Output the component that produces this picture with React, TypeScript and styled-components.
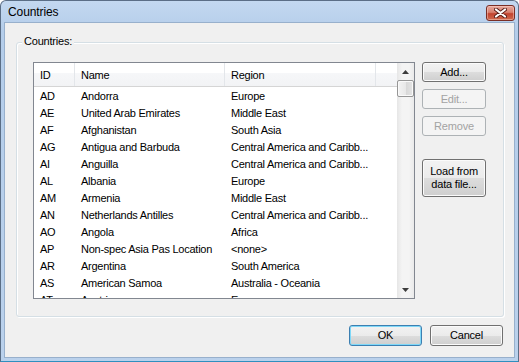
import React from "react";
import styled, { createGlobalStyle } from "styled-components";

interface Country {
    id: string;
    name: string;
    region: string;
}

const CARIB = "Central America and Caribb...";

const COUNTRIES: Country[] = [
    { id: "AD", name: "Andorra", region: "Europe" },
    { id: "AE", name: "United Arab Emirates", region: "Middle East" },
    { id: "AF", name: "Afghanistan", region: "South Asia" },
    { id: "AG", name: "Antigua and Barbuda", region: CARIB },
    { id: "AI", name: "Anguilla", region: CARIB },
    { id: "AL", name: "Albania", region: "Europe" },
    { id: "AM", name: "Armenia", region: "Middle East" },
    { id: "AN", name: "Netherlands Antilles", region: CARIB },
    { id: "AO", name: "Angola", region: "Africa" },
    { id: "AP", name: "Non-spec Asia Pas Location", region: "<none>" },
    { id: "AR", name: "Argentina", region: "South America" },
    { id: "AS", name: "American Samoa", region: "Australia - Oceania" },
    { id: "AT", name: "Austria", region: "Europe" },
];

const COLUMNS = [
    { key: "id", label: "ID", width: 41 },
    { key: "name", label: "Name", width: 150 },
    { key: "region", label: "Region", width: 151 },
] as const;

const Arrow: React.FC<{ up?: boolean }> = ({ up }) => (
    <svg width="7" height="4" viewBox="0 0 7 4">
        <path d={up ? "M3.5 0 L7 4 L0 4 Z" : "M0 0 L7 0 L3.5 4 Z"} fill="#3d3d3d" />
    </svg>
);

const CloseGlyph = () => (
    <svg width="13" height="10" viewBox="0 0 13 10">
        <path d="M2 1.5 L11 8.5 M11 1.5 L2 8.5" stroke="#5a1f1a" strokeWidth="4" strokeLinecap="round" />
        <path d="M2 1.5 L11 8.5 M11 1.5 L2 8.5" stroke="#ffffff" strokeWidth="2.2" strokeLinecap="round" />
    </svg>
);

export default function App() {
    return (
        <>
            <GlobalStyle />
            <Window>
                <TitleBar>
                    <Title>Countries</Title>
                    <CloseButton>
                        <CloseGlyph />
                    </CloseButton>
                </TitleBar>
                <Client>
                    <GroupBox>
                        <Legend>Countries:</Legend>
                        <ListView>
                            <ListMain>
                                <Header>
                                    {COLUMNS.map(c => (
                                        <HeaderCell key={c.key} $width={c.width}>
                                            {c.label}
                                        </HeaderCell>
                                    ))}
                                    <HeaderFiller />
                                </Header>
                                <Rows>
                                    {COUNTRIES.map(c => (
                                        <Row key={c.id}>
                                            <Cell $width={41}>{c.id}</Cell>
                                            <Cell $width={150}>{c.name}</Cell>
                                            <Cell $width={151}>{c.region}</Cell>
                                        </Row>
                                    ))}
                                </Rows>
                            </ListMain>
                            <ScrollBar>
                                <ScrollArrow>
                                    <Arrow up />
                                </ScrollArrow>
                                <Track>
                                    <Thumb />
                                </Track>
                                <ScrollArrow>
                                    <Arrow />
                                </ScrollArrow>
                            </ScrollBar>
                        </ListView>
                        <SideButtons>
                            <Button>Add...</Button>
                            <Button disabled>Edit...</Button>
                            <Button disabled>Remove</Button>
                            <Button $tall>
                                Load from
                                <br />
                                data file...
                            </Button>
                        </SideButtons>
                    </GroupBox>
                    <Footer>
                        <Button $default $wide>
                            OK
                        </Button>
                        <Button $wide>Cancel</Button>
                    </Footer>
                </Client>
            </Window>
        </>
    );
}

// ---------------------------------------------------------------------------
// Styles
// ---------------------------------------------------------------------------

const GlobalStyle = createGlobalStyle`
    html, body {
        margin: 0;
        padding: 0;
        background: #ffffff;
    }
    body {
        font-family: "Liberation Sans", Arial, sans-serif;
        font-size: 11px;
        color: #000;
    }
`;

const Window = styled.div`
    box-sizing: border-box;
    width: 519px;
    height: 362px;
    display: flex;
    flex-direction: column;
    border: 1px solid #5b6e86;
    border-bottom-color: #2f8fbf;
    border-radius: 6px 6px 0 0;
    background: linear-gradient(#c3d8f0, #b4cdea 30px, #bad1ec);
    padding: 0 3px 3px 3px;
    overflow: hidden;
`;

const TitleBar = styled.div`
    height: 21px;
    display: flex;
    align-items: center;
    justify-content: space-between;
    padding: 0 0 0 4px;
`;

const Title = styled.span`
    font-family: "Liberation Sans", Arial, sans-serif;
    font-size: 12px;
    color: #000;
    letter-spacing: -0.1px;
`;

const CloseButton = styled.div`
    box-sizing: border-box;
    width: 29px;
    height: 16px;
    margin-top: 2px;
    display: flex;
    align-items: center;
    justify-content: center;
    border: 1px solid #7a2e25;
    border-radius: 3px;
    background: linear-gradient(#e6a89d 0%, #d8806f 45%, #c2432f 55%, #cf6b4f 100%);
    box-shadow: inset 0 0 0 1px rgba(255, 220, 210, 0.45);
`;

const Client = styled.div`
    flex: 1;
    display: flex;
    flex-direction: column;
    background: #f0f0f0;
    border: 1px solid #98b0cc;
    padding: 19px 10px 0 11px;
`;

const GroupBox = styled.div`
    position: relative;
    box-sizing: border-box;
    height: 275px;
    display: flex;
    gap: 7px;
    padding: 19px 17px 0 16px;
    border: 1px solid #d5dfe5;
    border-radius: 3px;
    box-shadow: inset 1px 1px 0 #ffffff, 1px 1px 0 #ffffff;
`;

const Legend = styled.span`
    position: absolute;
    top: -8px;
    left: 5px;
    padding: 0 2px;
    background: #f0f0f0;
    letter-spacing: -0.2px;
`;

const ListView = styled.div`
    box-sizing: border-box;
    width: 382px;
    height: 237px;
    display: flex;
    border: 1px solid #828790;
    background: #ffffff;
`;

const ListMain = styled.div`
    flex: 1;
    display: flex;
    flex-direction: column;
    overflow: hidden;
`;

const Header = styled.div`
    box-sizing: border-box;
    height: 24px;
    display: flex;
    border-bottom: 1px solid #d5d5d5;
    background: linear-gradient(#ffffff 0%, #ffffff 42%, #f6f7f9 42%, #f2f3f5 100%);
`;

const HeaderCell = styled.div<{ $width: number }>`
    box-sizing: border-box;
    width: ${p => p.$width}px;
    flex: none;
    display: flex;
    align-items: center;
    padding-left: 6px;
    padding-top: 1px;
    border-right: 1px solid #e3e6ea;
    letter-spacing: -0.25px;
`;

const HeaderFiller = styled.div`
    flex: 1;
`;

const Rows = styled.div`
    flex: 1;
    overflow: hidden;
`;

const Row = styled.div`
    height: 17px;
    display: flex;
    align-items: center;
`;

const Cell = styled.div<{ $width: number }>`
    box-sizing: border-box;
    width: ${p => p.$width}px;
    flex: none;
    padding-left: 6px;
    white-space: nowrap;
    overflow: hidden;
    letter-spacing: -0.25px;
`;

const ScrollBar = styled.div`
    width: 17px;
    flex: none;
    display: flex;
    flex-direction: column;
    background: linear-gradient(90deg, #e6e6e6, #f4f4f4 30%, #f4f4f4 70%, #eaeaea);
`;

const ScrollArrow = styled.div`
    height: 17px;
    flex: none;
    display: flex;
    align-items: center;
    justify-content: center;
`;

const Track = styled.div`
    flex: 1;
    display: flex;
    flex-direction: column;
`;

const Thumb = styled.div`
    box-sizing: border-box;
    height: 17px;
    border: 1px solid #969696;
    border-radius: 2px;
    background: linear-gradient(90deg, #f3f3f3, #e8e8e8 50%, #d8d8d8 55%, #e4e4e4);
    box-shadow: inset 0 0 0 1px #fafafa;
`;

const SideButtons = styled.div`
    display: flex;
    flex-direction: column;
    gap: 7px;
`;

const Button = styled.button<{ $tall?: boolean; $wide?: boolean; $default?: boolean }>`
    box-sizing: border-box;
    width: ${p => (p.$wide ? 73 : 64)}px;
    height: ${p => (p.$tall ? 38 : p.$wide ? 21 : 20)}px;
    margin-top: ${p => (p.$tall ? 16 : 0)}px;
    padding: 0;
    font-family: "Liberation Sans", Arial, sans-serif;
    font-size: 11px;
    line-height: 13px;
    letter-spacing: -0.2px;
    color: #000;
    border: 1px solid ${p => (p.$default ? "#3c7fb1" : "#707070")};
    border-radius: 3px;
    background: linear-gradient(#f2f2f2 0%, #ebebeb 50%, #dddddd 50%, #cfcfcf 100%);
    box-shadow: inset 0 0 0 1px ${p => (p.$default ? "#7fd8f8" : "#fbfbfb")};

    &:disabled {
        color: #a3a3a3;
        border-color: #adb2b5;
        background: #f4f4f4;
        box-shadow: none;
    }
`;

const Footer = styled.div`
    display: flex;
    justify-content: flex-end;
    gap: 8px;
    padding: 8px 1px 0 0;
`;
